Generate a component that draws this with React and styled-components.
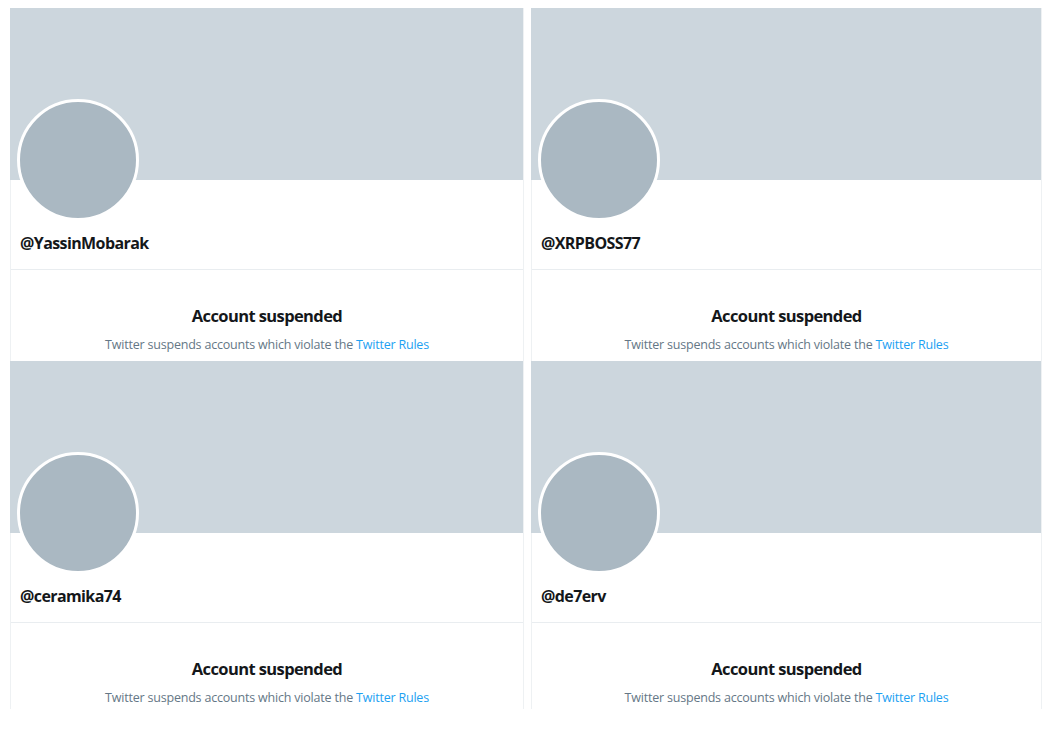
import React from "react";
import styled, { createGlobalStyle } from "styled-components";

const Global = createGlobalStyle`
  html, body { margin: 0; padding: 0; background: #fff; }
  body { font-family: "Open Sans", "Noto Sans", sans-serif; }
`;

const Page = styled.div`
  padding: 8px 0 0 10px;
  width: 1057px;
  height: 733px;
  box-sizing: border-box;
`;

const Grid = styled.div`
  display: grid;
  grid-template-columns: 514px 511px;
  grid-auto-rows: 353px;
  column-gap: 7px;
  height: 701px;
  overflow: hidden;
`;

const Panel = styled.section`
  display: flex;
  flex-direction: column;
  border-left: 1px solid #eef1f3;
  border-right: 1px solid #eef1f3;
  background: #fff;
`;

const Banner = styled.div`
  height: 172px;
  background: #ccd6dd;
  margin-left: -1px;
`;

const Header = styled.div`
  height: 89px;
  padding-left: 6px;
  border-bottom: 1px solid #e9edf0;
  display: flex;
  flex-direction: column;
`;

const Avatar = styled.div`
  width: 116px;
  height: 116px;
  margin-top: -81px;
  border-radius: 50%;
  background: #aab8c2;
  border: 3px solid #fff;
  flex: none;
`;

const Handle = styled.div`
  margin: 11px 0 0 3px;
  font-size: 16px;
  line-height: 22px;
  font-weight: 700;
  color: #14171a;
  letter-spacing: -0.6px;
`;

const Body = styled.div`
  padding-top: 35px;
  display: flex;
  flex-direction: column;
  align-items: center;
  gap: 9px;
`;

const Title = styled.div`
  font-size: 16.5px;
  line-height: 22px;
  font-weight: 700;
  color: #14171a;
  letter-spacing: -0.6px;
`;

const Sub = styled.div`
  font-size: 12.5px;
  line-height: 18px;
  color: #657786;
  letter-spacing: -0.2px;
`;

const RulesLink = styled.a`
  color: #1da1f2;
  text-decoration: none;
`;

const accounts = ["YassinMobarak", "XRPBOSS77", "ceramika74", "de7erv"];

function SuspendedCard({ name }) {
  return (
    <Panel>
      <Banner />
      <Header>
        <Avatar />
        <Handle>@{name}</Handle>
      </Header>
      <Body>
        <Title>Account suspended</Title>
        <Sub>
          Twitter suspends accounts which violate the{" "}
          <RulesLink href="#">Twitter Rules</RulesLink>
        </Sub>
      </Body>
    </Panel>
  );
}

export default function App() {
  return (
    <>
      <Global />
      <Page>
        <Grid>
          {accounts.map((a) => (
            <SuspendedCard key={a} name={a} />
          ))}
        </Grid>
      </Page>
    </>
  );
}
